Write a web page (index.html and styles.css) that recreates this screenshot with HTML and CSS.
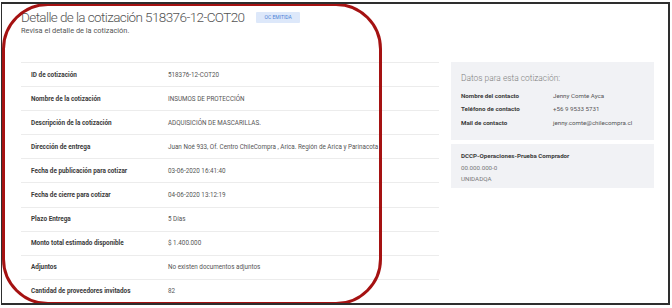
FILE: index.html
```html
<!DOCTYPE html>
<html lang="es">
<head>
    <meta charset="UTF-8">
    <meta name="viewport" content="width=device-width, initial-scale=1.0">
    <title>Detalle de la cotización</title>
    <link rel="stylesheet" href="styles.css">
</head>
<body>
    <div class="frame">
        <div class="main">
            <div class="head">
                <h1>Detalle de la cotización 518376-12-COT20</h1>
                <span class="badge">OC EMITIDA</span>
            </div>
            <p class="sub">Revisa el detalle de la cotización.</p>

            <div class="detail">
                <div class="row"><span class="label">ID de cotización</span><span class="value">518376-12-COT20</span></div>
                <div class="row"><span class="label">Nombre de la cotización</span><span class="value">INSUMOS DE PROTECCIÓN</span></div>
                <div class="row"><span class="label">Descripción de la cotización</span><span class="value">ADQUISICIÓN DE MASCARILLAS.</span></div>
                <div class="row"><span class="label">Dirección de entrega</span><span class="value">Juan Noé 933, Of. Centro ChileCompra , Arica. Región de Arica y Parinacota</span></div>
                <div class="row"><span class="label">Fecha de publicación para cotizar</span><span class="value">03-06-2020 16:41:40</span></div>
                <div class="row"><span class="label">Fecha de cierre para cotizar</span><span class="value">04-06-2020 13:12:19</span></div>
                <div class="row"><span class="label">Plazo Entrega</span><span class="value">5 Días</span></div>
                <div class="row"><span class="label">Monto total estimado disponible</span><span class="value">$ 1.400.000</span></div>
                <div class="row"><span class="label">Adjuntos</span><span class="value">No existen documentos adjuntos</span></div>
                <div class="row"><span class="label">Cantidad de proveedores invitados</span><span class="value">82</span></div>
            </div>
        </div>

        <div class="aside">
            <div class="box contact">
                <h2>Datos para esta cotización:</h2>
                <div class="crow"><span class="clabel">Nombre del contacto</span><span class="cvalue">Jenny Comte Ayca</span></div>
                <div class="crow"><span class="clabel">Teléfono de contacto</span><span class="cvalue">+56 9 9533 5731</span></div>
                <div class="crow"><span class="clabel">Mail de contacto</span><span class="cvalue">jenny.comte@chilecompra.cl</span></div>
            </div>
            <div class="box unit">
                <div class="unit-name">DCCP-Operaciones-Prueba Comprador</div>
                <div class="unit-line">00.000.000-0</div>
                <div class="unit-line">UNIDADQA</div>
            </div>
        </div>

        <!-- highlight drawn over the screenshot -->
        <div class="mark"></div>
    </div>
</body>
</html>
```

FILE: styles.css
```css
body {
    margin: 0;
    background: #ffffff;
    font-family: Roboto, "Liberation Sans", sans-serif;
}
.frame {
    position: relative;
    display: flex;
    gap: 12px;
    box-sizing: border-box;
    width: 669px;
    height: 303px;
    margin: 2px 0 0 1px;
    padding: 4px 0 0 19px;
    border: 2px solid #2e2e2e;
    border-left-width: 1.5px;
    overflow: hidden;
}
.main {
    width: 418px;
}
.head {
    display: flex;
    align-items: center;
    gap: 12px;
    padding-top: 1px;
}
h1 {
    margin: 0;
    font-size: 13.5px;
    line-height: 17px;
    letter-spacing: -0.6px;
    font-weight: 300;
    color: #555;
}
.badge {
    display: inline-block;
    padding: 0 8px;
    height: 11px;
    line-height: 11px;
    font-size: 5px;
    color: #4a7fd6;
    background: #dde8fa;
    border-radius: 1px;
}
.sub {
    margin: 0;
    font-size: 7.4px;
    line-height: 10px;
    color: #555;
}
.detail {
    margin-top: 26px;
}
.row {
    display: flex;
    align-items: center;
    height: 24.1px;
    box-sizing: border-box;
    padding-left: 10px;
    border-top: 1px solid #ececec;
    font-size: 6.4px;
}
.label {
    width: 137px;
    flex-shrink: 0;
    font-weight: 700;
    color: #3a3a3a;
}
.value {
    font-size: 6.3px;
    color: #555;
    white-space: nowrap;
}
.aside {
    width: 203px;
    margin-top: 54px;
}
.box {
    background: #f1f2f5;
    padding: 0 10px;
}
.contact {
    height: 78px;
    padding-top: 10px;
    box-sizing: border-box;
}
h2 {
    margin: 0 0 5px;
    font-size: 8.4px;
    line-height: 12px;
    font-weight: 300;
    color: #808080;
}
.crow {
    display: flex;
    height: 13.5px;
    align-items: center;
    font-size: 6.2px;
}
.clabel {
    width: 92px;
    font-weight: 700;
    color: #3a3a3a;
}
.cvalue {
    color: #555;
}
.unit {
    margin-top: 4px;
    padding-top: 7px;
    padding-bottom: 2px;
    font-size: 6.2px;
}
.unit-name {
    line-height: 11.5px;
    font-weight: 700;
    color: #3a3a3a;
}
.unit-line {
    line-height: 11.5px;
    color: #777;
}
.mark {
    position: absolute;
    left: 0;
    top: -1px;
    width: 380px;
    height: 302px;
    box-sizing: border-box;
    border: 3px solid #a51212;
    border-radius: 46px;
    pointer-events: none;
}
```
